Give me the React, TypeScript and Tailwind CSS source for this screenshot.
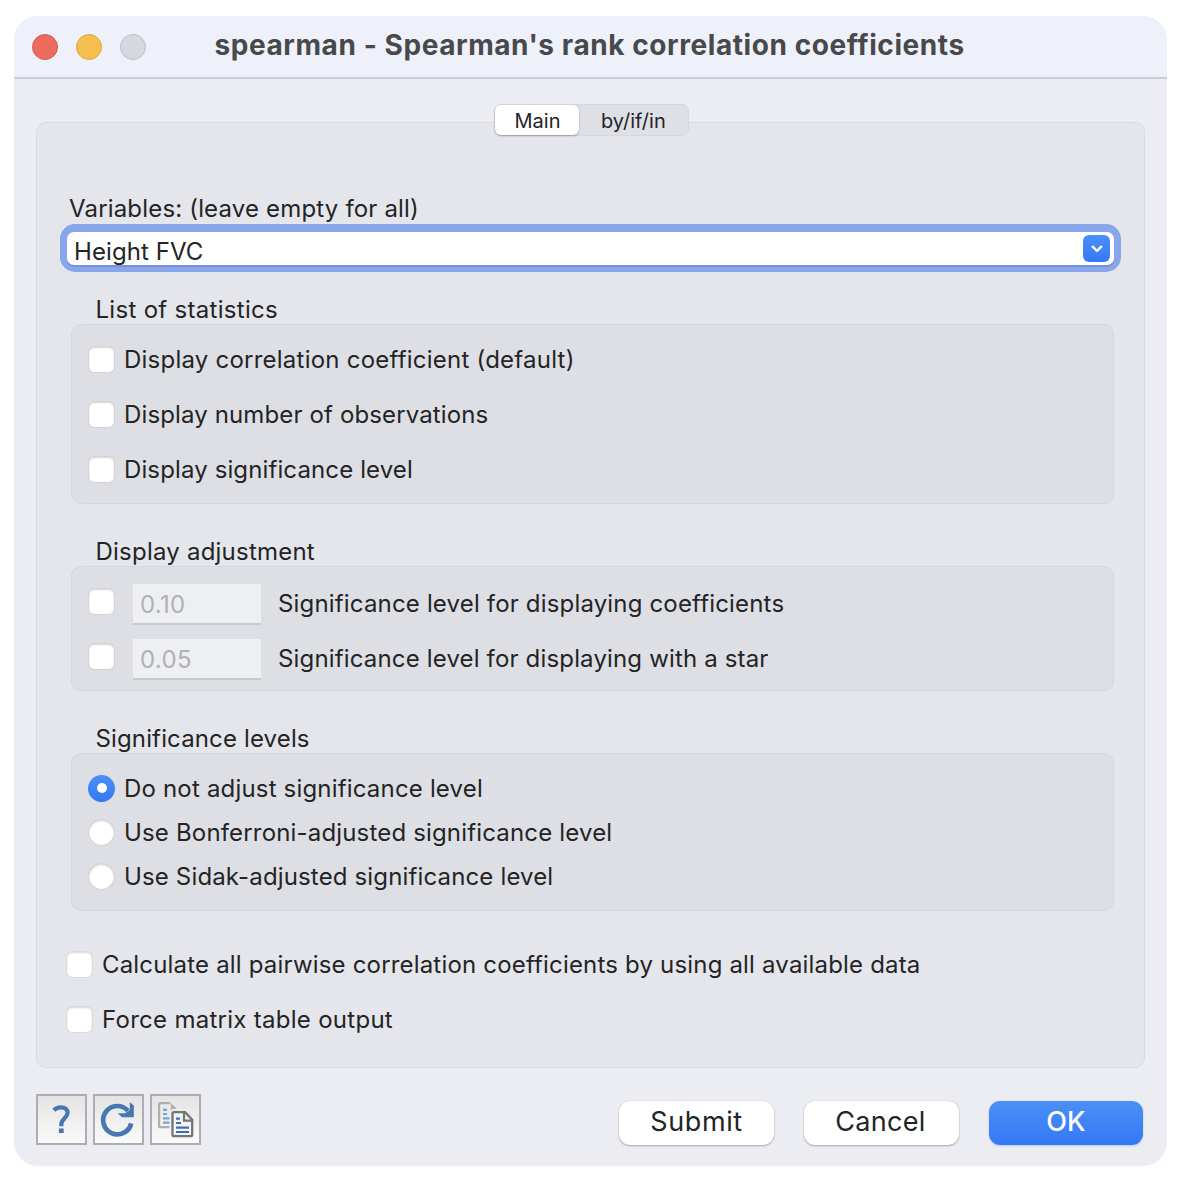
import React from "react";

const fieldShadow =
  "shadow-[inset_0_1px_2px_rgba(0,0,0,0.16),0_0_0_1px_rgba(0,0,0,0.05)]";

function Check({ className = "" }: { className?: string }) {
  return (
    <span
      role="checkbox"
      aria-checked={false}
      className={`block size-[25px] shrink-0 rounded-[5px] bg-white ${fieldShadow} ${className}`}
    />
  );
}

function Radio({ checked = false }: { checked?: boolean }) {
  return checked ? (
    <span className="flex size-[27px] shrink-0 items-center justify-center rounded-full bg-linear-to-b from-[#4a90f7] to-[#3478f6]">
      <span className="size-[10px] rounded-full bg-white" />
    </span>
  ) : (
    <span className={`mx-px block size-[25px] shrink-0 rounded-full bg-white ${fieldShadow}`} />
  );
}

function Option({ label, className = "" }: { label: string; className?: string }) {
  return (
    <div className="flex h-[55px] items-center">
      <Check />
      <span className={`ml-[10px] ${className}`}>{label}</span>
    </div>
  );
}

function RadioOption({ label, checked, className }: { label: string; checked?: boolean; className: string }) {
  return (
    <div className="flex h-[44px] items-center gap-[9px]">
      <Radio checked={checked} />
      <span className={`pt-px ${className}`}>{label}</span>
    </div>
  );
}

function Group({
  title,
  titleClass,
  className,
  children,
}: {
  title: string;
  titleClass: string;
  className: string;
  children: React.ReactNode;
}) {
  return (
    <section className="ml-[34px] mr-[30px]">
      <h2 className={`ml-[24.5px] flex h-[30px] items-center pt-px font-normal ${titleClass}`}>{title}</h2>
      <div className={`rounded-[10px] border border-[#d6d7dc] bg-[#dedfe4] ${className}`}>{children}</div>
    </section>
  );
}

function Adjustment({ value, label, className }: { value: string; label: string; className: string }) {
  return (
    <div className="flex h-[55px] items-center">
      <Check className="-mt-[5px]" />
      <span className="ml-[19px] mt-[2px] flex h-[41px] w-[128px] items-center border-b-2 border-[#c8c9cc] bg-[#eeeff1] pl-[7px] pt-[2px] tracking-[0.3px] text-[#b0b1b4]">
        {value}
      </span>
      <span className={`ml-[17px] ${className}`}>{label}</span>
    </div>
  );
}

function IconButton({ children, label }: { children: React.ReactNode; label: string }) {
  return (
    <button
      aria-label={label}
      className="flex size-[51px] items-center justify-center border-2 border-[#acaeaf] bg-linear-to-b from-[#e4e4e4] to-[#fafafa]"
    >
      {children}
    </button>
  );
}

export default function App() {
  return (
    <div className="h-[1182px] w-[1182px] overflow-hidden bg-white pl-[14px] pt-4 font-['Inter',sans-serif] text-[24px] leading-[30px] text-[#232425]">
      <div className="flex h-[1150px] w-[1153px] flex-col overflow-hidden rounded-[24px] bg-[#ecedf2]">
        <header className="flex h-[63px] shrink-0 items-center border-b-2 border-[#cbcdd4] bg-[#eef1fa] pl-[18px]">
          <span className="size-[26px] rounded-full border border-[#d9584e] bg-[#ec6a5e]" />
          <span className="ml-[18px] size-[26px] rounded-full border border-[#dba73c] bg-[#f4bf4f]" />
          <span className="ml-[18px] size-[26px] rounded-full border border-[#bbbec6] bg-[#d5d8de]" />
          <h1 className="-mt-[3px] ml-[68.5px] whitespace-nowrap text-[28px] font-bold tracking-[0.57px] text-[#48494b]">
            spearman - Spearman's rank correlation coefficients
          </h1>
        </header>

        <main className="ml-[22px] mt-[43px] h-[946px] w-[1109px] shrink-0 rounded-[10px] border border-[#d9dae0] bg-[#e5e6eb]">
          <nav className="-mt-[19px] ml-[457px] flex h-[32px] w-[195px] rounded-[7px] border border-[#d7d8dd] bg-[#dfe0e5] text-[20px] leading-[32px]">
            <span className="h-[30px] w-[84px] rounded-[6px] bg-white pl-px text-center shadow-[0_1px_2px_rgba(0,0,0,0.3)]">
              Main
            </span>
            <span className="ml-[22px] whitespace-nowrap">by/if/in</span>
          </nav>

          <div className="ml-[32px] mt-[57px] flex h-[30px] items-center pt-px tracking-[0.17px]">
            Variables: (leave empty for all)
          </div>
          <div className="ml-[23px] mt-px h-[48px] w-[1061px] rounded-[15px] bg-[#8aa6ea] px-[7px] pt-[8px]">
            <div className="flex h-[33px] items-center rounded-[7px] bg-white pl-[7px] shadow-[0_2px_0_#7593dc]">
              <span className="mt-[7px] tracking-[0.08px]">Height FVC</span>
              <span className="ml-auto mr-[4px] flex size-[27px] items-center justify-center rounded-[6px] bg-linear-to-b from-[#4a90f7] to-[#3478f6]">
                <svg width="12" height="8" viewBox="0 0 12 8" fill="none" stroke="white" strokeWidth="2.4" strokeLinecap="round" strokeLinejoin="round">
                  <path d="M1.7 1.7 6 6 10.3 1.7" />
                </svg>
              </span>
            </div>
          </div>

          <div className="mt-[22px]">
            <Group title="List of statistics" titleClass="tracking-[0.3px]" className="h-[180px] pl-[17px] pt-[7px]">
              <Option label="Display correlation coefficient (default)" className="tracking-[0.23px]" />
              <Option label="Display number of observations" className="tracking-[0.13px]" />
              <Option label="Display significance level" className="tracking-[0.12px]" />
            </Group>
          </div>
          <div className="mt-[32px]">
            <Group title="Display adjustment" titleClass="tracking-[0.22px]" className="h-[125px] pl-[17px] pt-[9px]">
              <Adjustment value="0.10" label="Significance level for displaying coefficients" className="tracking-[0.17px]" />
              <Adjustment value="0.05" label="Significance level for displaying with a star" className="tracking-[0.16px]" />
            </Group>
          </div>
          <div className="mt-[32px]">
            <Group title="Significance levels" titleClass="tracking-[0.14px]" className="h-[158px] pl-[16px] pt-[12px]">
              <RadioOption checked label="Do not adjust significance level" className="tracking-[0.18px]" />
              <RadioOption label="Use Bonferroni-adjusted significance level" className="tracking-[0.17px]" />
              <RadioOption label="Use Sidak-adjusted significance level" className="tracking-[0.15px]" />
            </Group>
          </div>
          <div className="ml-[30px] mt-[26px]">
            <Option label="Calculate all pairwise correlation coefficients by using all available data" className="tracking-[0.18px]" />
            <Option label="Force matrix table output" className="tracking-[0.28px]" />
          </div>
        </main>

        <footer className="ml-[22px] mt-[26px] flex">
          <div className="flex gap-[6px]">
            <IconButton label="Help">
              <svg width="47" height="47" viewBox="0 0 47 47" className="shrink-0" fill="none" stroke="#4776b4" strokeWidth="4.2">
                <path d="M15.8 14.2Q18.6 11.3 22.8 11.3C27.3 11.3 29.6 13.6 29.6 16.8C29.6 22 23.3 22.6 23.3 28.5V30.3" />
                <path d="M23.3 32.4V37" strokeWidth="4.8" />
              </svg>
            </IconButton>
            <IconButton label="Reset">
              <svg width="47" height="47" viewBox="0 0 47 47" className="shrink-0">
                <path d="M33 14.8A14.2 14.2 0 1 0 36.2 27.4" fill="none" stroke="#4776b4" strokeWidth="4.7" />
                <path d="M34.8 6.3 38.8 9.5V21.3H27L22.7 17.3H30L34.8 14Z" fill="#4776b4" />
              </svg>
            </IconButton>
            <IconButton label="Copy">
              <svg width="47" height="47" viewBox="0 0 47 47" className="shrink-0" fill="none">
                <path d="M17.5 31.2H8.6Q7.1 31.2 7.1 29.7V8.7Q7.1 7.2 8.6 7.2H18" stroke="#acaeaf" strokeWidth="2.2" />
                <path d="M17.5 6.1 25 12.8H20.5L18.8 14.5V8Z" fill="#acaeaf" />
                <path d="M11 13.8H15M11 18H15M11 22.3H17.5M11 26.6H17.5" stroke="#72a4d8" strokeWidth="2.2" />
                <path d="M22 16.2H33L40.2 23.6V38.7Q40.2 40.2 38.7 40.2H22Q20.5 40.2 20.5 38.7V17.7Q20.5 16.2 22 16.2Z" fill="#f3f3f3" stroke="#737474" strokeWidth="2.3" />
                <path d="M32 16.2V24.6H40.2" stroke="#737474" strokeWidth="2.2" />
                <path d="M24 22.7H28M24 27H29M24 31.7H37M24 36H37" stroke="#3f6fb3" strokeWidth="2.2" />
              </svg>
            </IconButton>
          </div>
          <div className="ml-[418px] mt-[7px] flex gap-[30px] text-[27px]">
            <button className="h-[44px] w-[155px] rounded-[11px] bg-white pb-[2px] tracking-[0.6px] shadow-[0_1px_2px_rgba(0,0,0,0.28),0_0_1px_rgba(0,0,0,0.2)]">Submit</button>
            <button className="h-[44px] w-[155px] rounded-[11px] bg-white pb-[2px] pr-[2px] tracking-[0.3px] shadow-[0_1px_2px_rgba(0,0,0,0.28),0_0_1px_rgba(0,0,0,0.2)]">Cancel</button>
            <button className="h-[44px] w-[154px] rounded-[11px] bg-linear-to-b from-[#4a90f7] to-[#3478f6] pb-[2px] font-medium text-white shadow-[0_1px_2px_rgba(52,120,246,0.3)]">OK</button>
          </div>
        </footer>
      </div>
    </div>
  );
}
